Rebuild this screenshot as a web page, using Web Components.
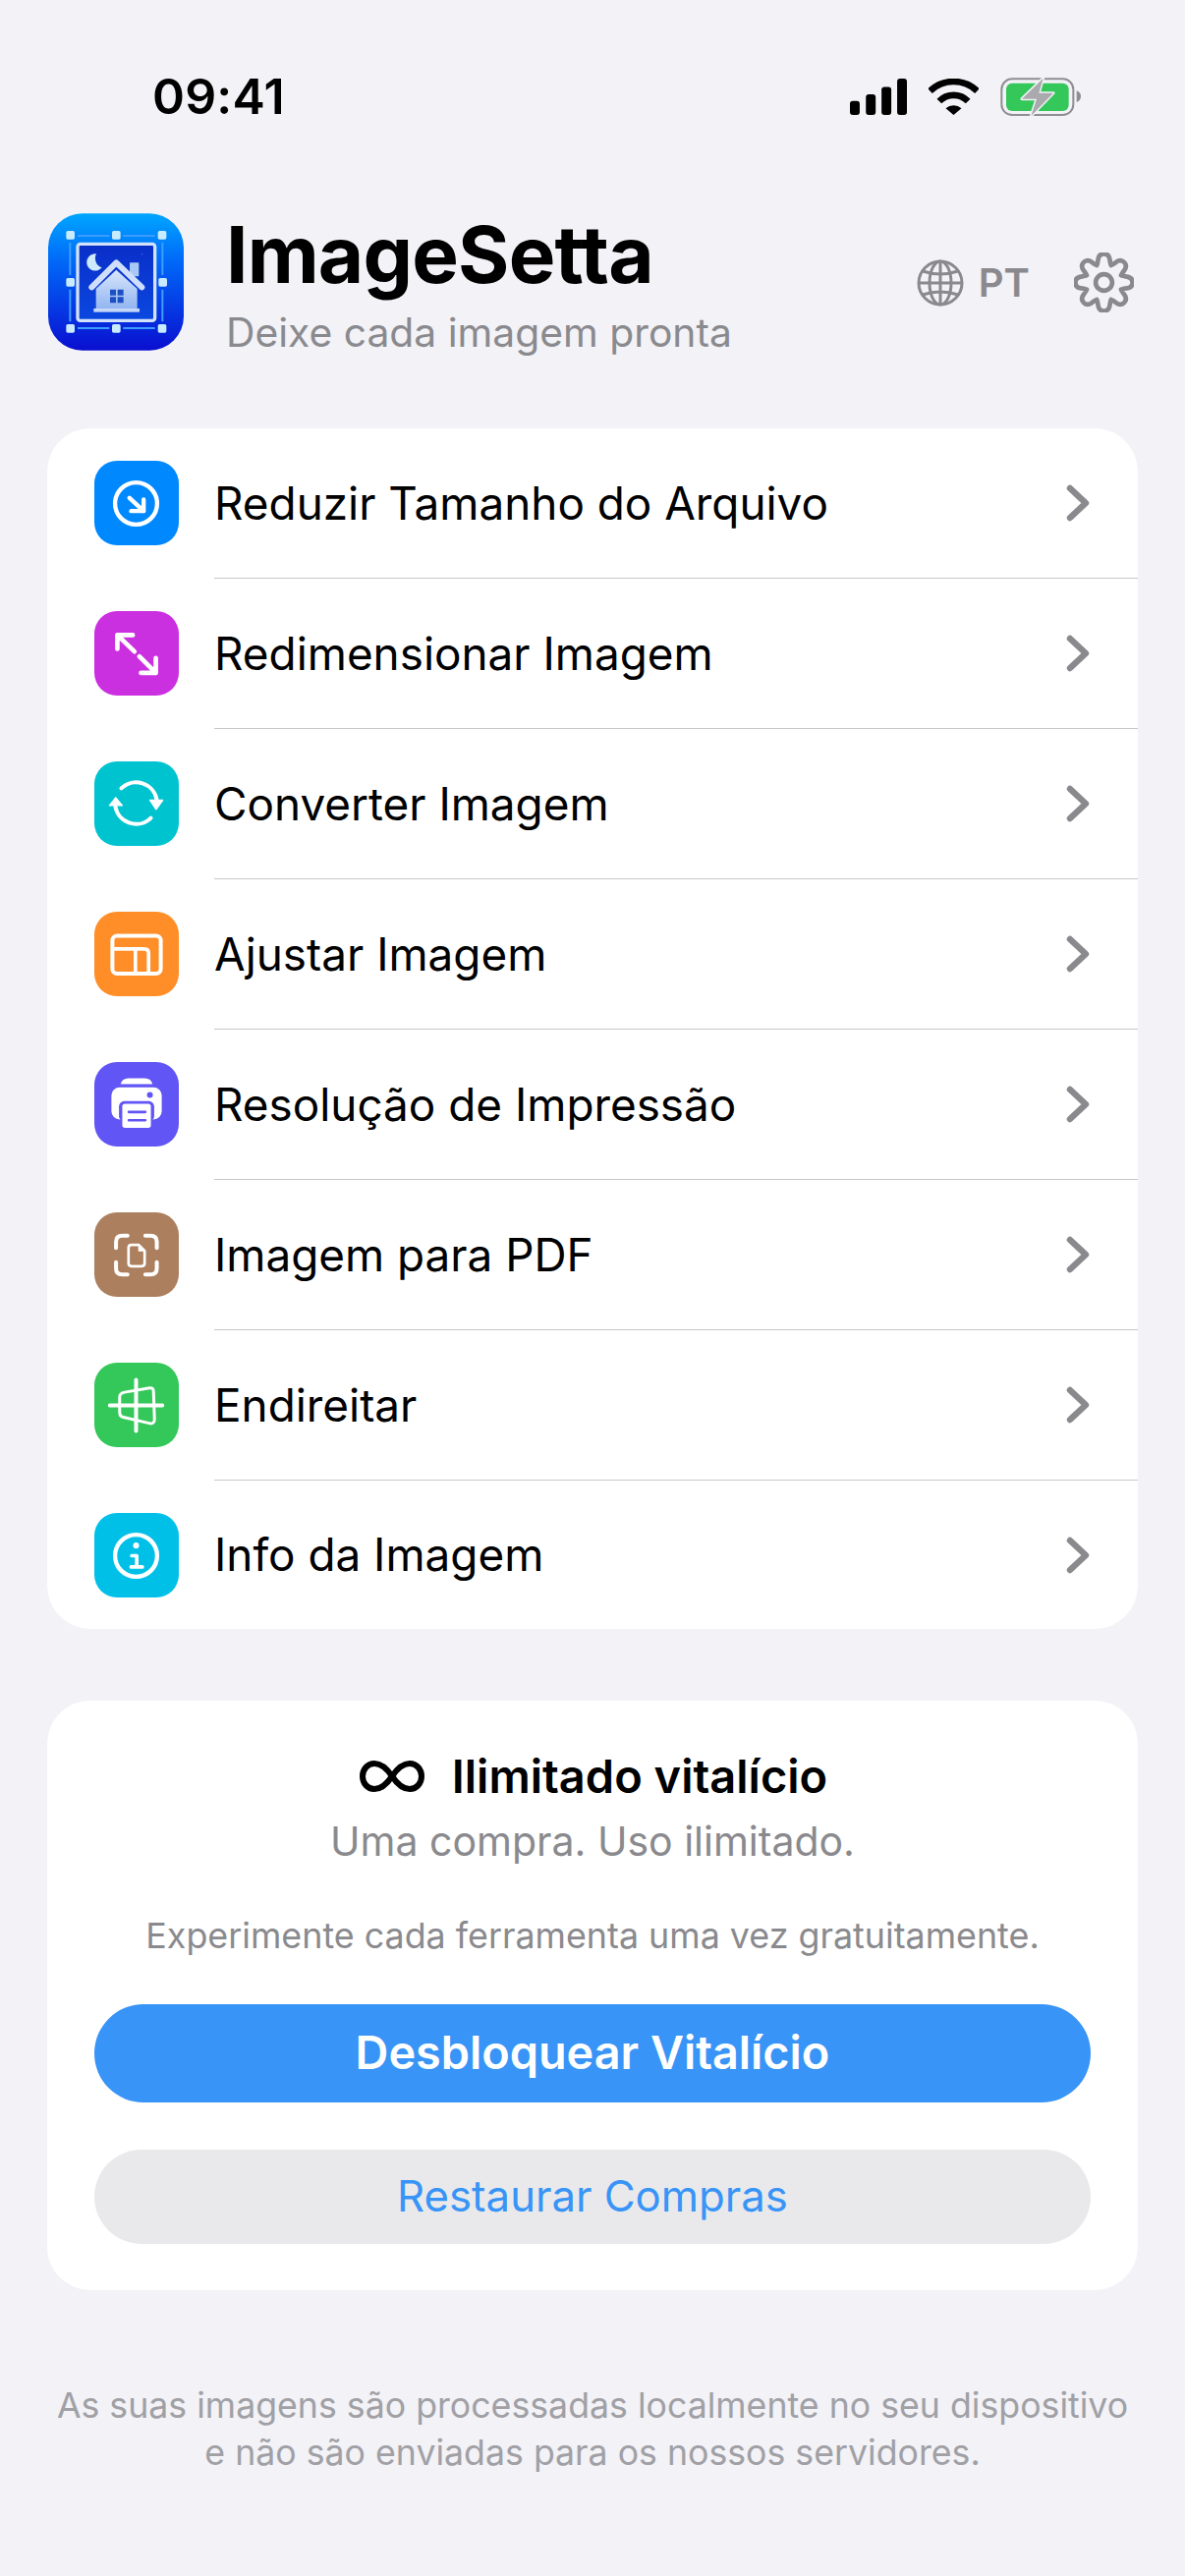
<!DOCTYPE html>
<html lang="pt">
<head>
<meta charset="utf-8">
<title>ImageSetta</title>
<style>
    html, body { margin: 0; background: #f2f2f7; }
    body { width: 1206px; height: 2622px; overflow: hidden; font-family: Inter, "Liberation Sans", sans-serif; color: #000; }
    main { display: block; padding: 0 48px; }
    svg.glyph { display: block; width: 86px; height: 86px; }
</style>
</head>
<body>
<status-bar></status-bar>
<app-header name="ImageSetta" tagline="Deixe cada imagem pronta" lang-code="PT"></app-header>
<main>
    <tool-list>
        <tool-row tint="#0088ff" label="Reduzir Tamanho do Arquivo">
            <svg class="glyph" viewBox="0 0 257 257" fill="none" stroke="#fff" stroke-width="13" stroke-linecap="round" stroke-linejoin="round"><circle cx="127" cy="130" r="64"/><path d="M107 113L150 153M150 118V153H112"/></svg>
        </tool-row>
        <tool-row tint="#cb30e0" label="Redimensionar Imagem">
            <svg class="glyph" viewBox="0 0 257 257" fill="none" stroke="#fff" stroke-width="14" stroke-linecap="round" stroke-linejoin="round"><path d="M70 115V73H117M70 73L122 123M187 143V188H142M187 188L137 138"/></svg>
        </tool-row>
        <tool-row tint="#00c3d0" label="Converter Imagem">
            <svg class="glyph" viewBox="0 0 257 257" fill="none" stroke="#fff" stroke-width="12" stroke-linecap="round" stroke-linejoin="round"><path d="M82 82A64 64 0 0 1 190 117M172 172A64 64 0 0 1 64 137"/><path fill="#fff" stroke-width="4" d="M169 118H208L188 146ZM46 134H85L65 110Z"/></svg>
        </tool-row>
        <tool-row tint="#ff8d28" label="Ajustar Imagem">
            <svg class="glyph" viewBox="0 0 257 257" fill="none" stroke="#fff" stroke-width="11" stroke-linecap="round" stroke-linejoin="round"><rect x="55" y="73" width="147" height="115" rx="14" stroke-width="12"/><path d="M56 113H152Q165 113 165 126V187M125 113V187"/></svg>
        </tool-row>
        <tool-row tint="#6155f5" label="Resolução de Impressão">
            <svg class="glyph" viewBox="0 0 257 257"><path fill="#fff" d="M80 67Q84 49 104 49H153Q173 49 177 67Z"/><rect x="52" y="77" width="153" height="98" rx="25" fill="#fff"/><rect x="75" y="119" width="107" height="62" rx="16" fill="#6155f5"/><rect x="85" y="127" width="87" height="73" rx="8" fill="#fff"/><circle cx="169" cy="100" r="9" fill="#6155f5"/><path d="M105 152H155M105 177H155" stroke="#6155f5" stroke-width="8" stroke-linecap="round"/></svg>
        </tool-row>
        <tool-row tint="#ac7f5e" label="Imagem para PDF">
            <svg class="glyph" viewBox="0 0 257 257" fill="none" stroke="#fff" stroke-width="12" stroke-linecap="round" stroke-linejoin="round"><path d="M66 108V90Q66 71 85 71H101M155 71H171Q190 71 190 90V108M66 152V170Q66 189 85 189H101M155 189H171Q190 189 190 170V152"/><path stroke-width="8" d="M113 99H135L153 117V155Q153 164 144 164H113Q104 164 104 155V108Q104 99 113 99Z"/><path fill="#fff" stroke-width="3" d="M135 100V117H152Z"/></svg>
        </tool-row>
        <tool-row tint="#34c759" label="Endireitar">
            <svg class="glyph" viewBox="0 0 257 257" fill="none" stroke="#fff" stroke-linecap="round" stroke-linejoin="round"><path stroke-width="12" d="M127 52V208M47 130H207"/><path stroke-width="9" d="M92 90L168 77Q180 75 180 88L183 172Q183 186 170 185L88 166Q77 164 77 152V104Q77 93 92 90Z"/></svg>
        </tool-row>
        <tool-row tint="#00c0e8" label="Info da Imagem" last>
            <svg class="glyph" viewBox="0 0 257 257" fill="none" stroke="#fff" stroke-width="13" stroke-linecap="round" stroke-linejoin="round"><circle cx="127" cy="130" r="64"/><circle cx="127" cy="99" r="9" fill="#fff" stroke="none"/><path stroke-width="11" d="M114 130H129V164M112 164H146"/></svg>
        </tool-row>
    </tool-list>
    <unlock-card></unlock-card>
</main>
<app-footer>As suas imagens são processadas localmente no seu dispositivo<br>e não são enviadas para os nossos servidores.</app-footer>

<script>
    // rounded 8 tooth cog outline, centred on 0,0
    function gearPath() {
        const pts = [];
        for (let i = 0; i < 8; i++) {
            const a = i * 45;
            [[-21, 56], [-10, 88], [10, 88], [21, 56]].forEach(([off, r]) => {
                const t = (a + off - 90) * Math.PI / 180;
                pts.push([r * Math.cos(t), r * Math.sin(t)]);
            });
        }
        const mid = (p, q) => [(p[0] + q[0]) / 2, (p[1] + q[1]) / 2];
        let d = "M" + mid(pts[pts.length - 1], pts[0]).map(n => n.toFixed(1)).join(" ");
        pts.forEach((p, i) => {
            const m = mid(p, pts[(i + 1) % pts.length]);
            d += "Q" + p.map(n => n.toFixed(1)).join(" ") + " " + m.map(n => n.toFixed(1)).join(" ");
        });
        return d + "Z";
    }

    class StatusBar extends HTMLElement {
        constructor() {
            super();
            this.attachShadow({ mode: "open" });
        }

        connectedCallback() {
            this.shadowRoot.innerHTML = `
                <style>
                    :host { display: flex; align-items: center; justify-content: space-between; height: 196px; box-sizing: border-box; padding: 0 106px 0 155px; }
                    .time { font: 600 50px/1 Inter, "Liberation Sans", sans-serif; letter-spacing: 0.2px; }
                    .icons { display: flex; align-items: center; }
                    svg { display: block; }
                </style>
                <span class="time">09:41</span>
                <div class="icons">
                    <svg width="58" height="37" viewBox="75 57 175 111" style="margin-right:22px"><rect x="75" y="125" width="30" height="43" rx="9"/><rect x="124" y="105" width="30" height="63" rx="9"/><rect x="172" y="82" width="30" height="86" rx="9"/><rect x="220" y="57" width="30" height="111" rx="9"/></svg>
                    <svg width="51" height="37" viewBox="316 57 152 111" style="margin-right:22px"><path d="M320 95A104 104 0 0 1 464 95M348 126A62 62 0 0 1 436 126" fill="none" stroke="#000" stroke-width="20"/><path d="M392 168L368 148A36 36 0 0 1 416 148Z"/></svg>
                    <svg width="82" height="40" viewBox="534 50 246 120"><rect x="538" y="57" width="219" height="110" rx="32" fill="none" stroke="#8e8e93" stroke-width="6"/><rect x="552" y="70" width="191" height="85" rx="18" fill="#34c759"/><path d="M767 93Q780 98 780 110Q780 123 767 128Z" fill="#8e8e93"/><path d="M665 55L600 118H645L628 170L696 100H652Z" fill="#a9a9ae" stroke="#f2f2f7" stroke-width="9" stroke-linejoin="round" paint-order="stroke"/></svg>
                </div>
            `;
        }
    }

    class AppHeader extends HTMLElement {
        constructor() {
            super();
            this.attachShadow({ mode: "open" });
        }

        connectedCallback() {
            this.shadowRoot.innerHTML = `
                <style>
                    :host { display: flex; align-items: flex-start; height: 240px; box-sizing: border-box; padding: 21px 52px 0 49px; }
                    .logo { display: block; width: 138px; height: 140px; flex: none; margin-right: 43px; }
                    .names { flex: 1; min-width: 0; }
                    h1 { margin: 0; font: 700 80px/84px Inter, "Liberation Sans", sans-serif; letter-spacing: -0.8px; height: 97px; }
                    p { margin: 0; font: 400 40.8px/48px Inter, "Liberation Sans", sans-serif; color: #8a8a8e; }
                    .actions { display: flex; align-items: center; color: #8a8a8e; margin-top: 40px; }
                    .lang { font: 600 40px/1 Inter, "Liberation Sans", sans-serif; margin: 0 45px 0 15px; }
                    svg { display: block; }
                </style>
                <svg class="logo" viewBox="56 52 414 418">
                    <defs>
                        <linearGradient id="sky" x1="0" y1="0" x2="0" y2="1"><stop offset="0" stop-color="#00a6ff"/><stop offset=".35" stop-color="#0068f8"/><stop offset="1" stop-color="#0a0fd0"/></linearGradient>
                        <linearGradient id="night" x1="0" y1="0" x2="0" y2="1"><stop offset="0" stop-color="#0a2ec8"/><stop offset="1" stop-color="#0a48e0"/></linearGradient>
                        <linearGradient id="wall" x1="0" y1="0" x2="0" y2="1"><stop offset="0" stop-color="#d8e6fc"/><stop offset="1" stop-color="#93b5f0"/></linearGradient>
                    </defs>
                    <rect x="56" y="52" width="414" height="418" rx="104" fill="url(#sky)"/>
                    <path d="M146 120H243M285 120H382M146 402H243M285 402H382M123 140V240M123 284V382M405 140V240M405 284V382" stroke="#3d9dff" stroke-width="6" fill="none"/>
                    <g fill="#c9ebff">
                        <rect x="111" y="105" width="26" height="26" rx="5"/><rect x="251" y="105" width="26" height="26" rx="5"/><rect x="391" y="105" width="26" height="26" rx="5"/>
                        <rect x="111" y="249" width="26" height="26" rx="5"/><rect x="393" y="249" width="26" height="26" rx="5"/>
                        <rect x="111" y="390" width="26" height="26" rx="5"/><rect x="251" y="390" width="26" height="26" rx="5"/><rect x="391" y="390" width="26" height="26" rx="5"/>
                    </g>
                    <rect x="146" y="145" width="236" height="234" rx="8" fill="url(#night)" stroke="#d3e2fb" stroke-width="10"/>
                    <path d="M203 175A26 26 0 1 0 220 217A30 30 0 0 1 203 175Z" fill="#cdeaff"/>
                    <rect x="305" y="202" width="28" height="42" rx="2" fill="#a9c8f5"/>
                    <path d="M202 282L264 224L328 282V342H202Z" fill="url(#wall)"/>
                    <path d="M189 277L264 202L342 277" fill="none" stroke="#cfdffb" stroke-width="18" stroke-linecap="round" stroke-linejoin="round"/>
                    <rect x="195" y="342" width="140" height="11" fill="#c4d7f8"/>
                    <path d="M245 284h18v18h-18zM268 284h18v18h-18zM245 307h18v18h-18zM268 307h18v18h-18z" fill="#1c4fc4"/>
                    <circle cx="343" cy="176" r="1.6" fill="#6fb0ff"/>
                </svg>
                <div class="names">
                    <h1>${this.getAttribute("name")}</h1>
                    <p>${this.getAttribute("tagline")}</p>
                </div>
                <div class="actions">
                    <svg width="48" height="48" viewBox="0 0 48 48" fill="none" stroke="currentColor" stroke-width="3"><circle cx="24" cy="24" r="22"/><ellipse cx="24" cy="24" rx="11" ry="22"/><path d="M24 2V46M2 24H46M6 12Q24 18 42 12M6 36Q24 30 42 36"/></svg>
                    <span class="lang">${this.getAttribute("lang-code")}</span>
                    <svg width="61" height="61" viewBox="-91 -91 182 182" fill="none" stroke="currentColor" stroke-width="14" stroke-linejoin="round"><circle r="25"/><path d="${gearPath()}"/></svg>
                </div>
            `;
        }
    }

    class ToolList extends HTMLElement {
        constructor() {
            super();
            this.attachShadow({ mode: "open" });
        }

        connectedCallback() {
            this.shadowRoot.innerHTML = `
                <style>
                    :host { display: block; background: #fff; border-radius: 44px; overflow: hidden; }
                </style>
                <slot></slot>
            `;
        }
    }

    class ToolRow extends HTMLElement {
        constructor() {
            super();
            this.attachShadow({ mode: "open" });
        }

        connectedCallback() {
            const last = this.hasAttribute("last");
            this.shadowRoot.innerHTML = `
                <style>
                    :host { display: flex; align-items: stretch; height: ${last ? 151 : 153}px; padding-left: 48px; }
                    .tile { align-self: center; flex: none; width: 86px; height: 86px; margin: 0 36px ${last ? 0 : 1}px 0; border-radius: 23px; background: ${this.getAttribute("tint")}; }
                    .body { flex: 1; display: flex; align-items: center; justify-content: space-between; padding-right: 48px; border-bottom: ${last ? "0" : "1px solid #c8c8ca"}; font: 400 45.85px/1 Inter, "Liberation Sans", sans-serif; color: #000; }
                    .body span { padding-top: 1px; }
                    svg { display: block; }
                </style>
                <div class="tile"><slot></slot></div>
                <div class="body">
                    <span>${this.getAttribute("label")}</span>
                    <svg width="26" height="38" viewBox="0 0 26 38" fill="none" stroke="#8a8a8e" stroke-width="6.5" stroke-linecap="round" stroke-linejoin="round"><path d="M5 4L21 19L5 34"/></svg>
                </div>
            `;
        }
    }

    class UnlockCard extends HTMLElement {
        constructor() {
            super();
            this.attachShadow({ mode: "open" });
        }

        connectedCallback() {
            this.shadowRoot.innerHTML = `
                <style>
                    :host { display: block; margin-top: 73px; background: #fff; border-radius: 44px; padding: 49px 48px 48px; height: 600px; box-sizing: border-box; font-family: Inter, "Liberation Sans", sans-serif; text-align: center; }
                    .head { display: flex; align-items: center; justify-content: center; gap: 28px; padding-left: 2px; font: 600 47px/56px Inter, "Liberation Sans", sans-serif; color: #000; }
                    .head svg { display: block; }
                    .sub { margin: 14px 0 0; font-size: 41px; line-height: 48px; color: #8a8a8e; }
                    .note { margin: 51px 0 0; font-size: 35.85px; line-height: 42px; color: #8a8a8e; }
                    .buy, .restore { display: flex; align-items: center; justify-content: center; box-sizing: border-box; width: 100%; border: 0; padding: 0 0 2px; font-family: inherit; border-radius: 50px; }
                    .buy { margin-top: 49px; height: 100px; background: #3894f6; color: #fff; font-size: 46.8px; font-weight: 600; }
                    .restore { margin-top: 48px; height: 96px; background: #e9e9eb; color: #3894f6; font-size: 43.7px; font-weight: 400; }
                </style>
                <div class="head">
                    <svg width="66" height="32" viewBox="0 0 66 32" fill="none" stroke="#000" stroke-width="6"><path d="M33 16C27 7 22 3 15 3C8 3 3 9 3 16C3 23 8 29 15 29C22 29 27 25 33 16C39 7 44 3 51 3C58 3 63 9 63 16C63 23 58 29 51 29C44 29 39 25 33 16Z"/></svg>
                    <span>Ilimitado vitalício</span>
                </div>
                <p class="sub">Uma compra. Uso ilimitado.</p>
                <p class="note">Experimente cada ferramenta uma vez gratuitamente.</p>
                <button class="buy">Desbloquear Vitalício</button>
                <button class="restore">Restaurar Compras</button>
            `;
        }
    }

    class AppFooter extends HTMLElement {
        constructor() {
            super();
            this.attachShadow({ mode: "open" });
        }

        connectedCallback() {
            this.shadowRoot.innerHTML = `
                <style>
                    :host { display: block; margin-top: 93px; text-align: center; font: 400 35.7px/48px Inter, "Liberation Sans", sans-serif; color: #a0a0a5; }
                </style>
                <slot></slot>
            `;
        }
    }

    customElements.define("status-bar", StatusBar);
    customElements.define("app-header", AppHeader);
    customElements.define("tool-list", ToolList);
    customElements.define("tool-row", ToolRow);
    customElements.define("unlock-card", UnlockCard);
    customElements.define("app-footer", AppFooter);
</script>
</body>
</html>
